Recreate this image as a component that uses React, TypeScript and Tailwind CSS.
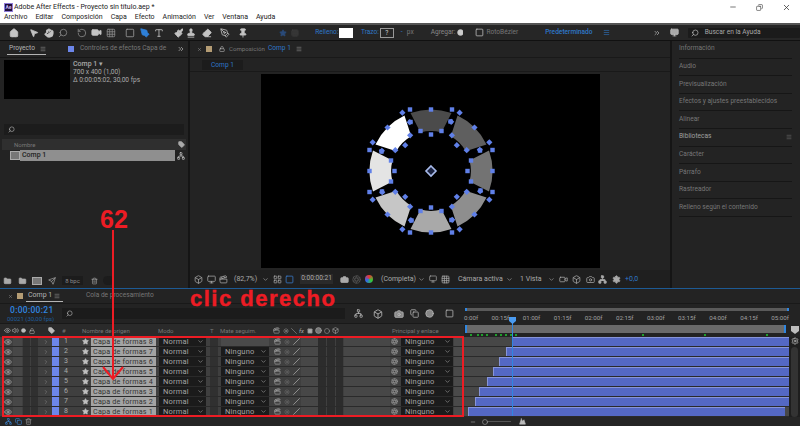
import { Aperture, Box, Camera, ChevronDown, ChevronRight, ChevronsRight, Circle, Clapperboard, Copy, Eye, Folder, Grid3x3, Hand, Home, LayoutGrid, Lock, Menu, Minus, Monitor, Mountain, MousePointer2, Network, PenTool, Pin, RotateCcw, Search, Settings, Slash, Square, Star, Stamp, Tag, Trash2, Type, Video, Volume2, X, Eraser, Paintbrush, Send, Sun } from 'lucide-react';

const menus = ['Archivo', 'Editar', 'Composición', 'Capa', 'Efecto', 'Animación', 'Ver', 'Ventana', 'Ayuda'];
const sidePanels = ['Información', 'Audio', 'Previsualización', 'Efectos y ajustes preestablecidos', 'Alinear', 'Bibliotecas', 'Carácter', 'Párrafo', 'Rastreador', 'Relleno según el contenido'];
const rulerMarks = ['0:00f', '00:15f', '01:00f', '01:15f', '02:00f', '02:15f', '03:00f', '03:15f', '04:00f', '04:15f', '05:00f'];
const greenMarks = [3, 10, 14, 19, 28, 33, 38, 43, 48, 175, 237, 299];

// layer number, name, offset of the bar inside the timeline
const layers = [
    { n: 1, name: 'Capa de formas 8', start: 48 },
    { n: 2, name: 'Capa de formas 7', start: 42 },
    { n: 3, name: 'Capa de formas 6', start: 35 },
    { n: 4, name: 'Capa de formas 5', start: 29 },
    { n: 5, name: 'Capa de formas 4', start: 23 },
    { n: 6, name: 'Capa de formas 3', start: 15 },
    { n: 7, name: 'Capa de formas 2', start: 11 },
    { n: 8, name: 'Capa de formas 1', start: 4 },
];

const ringGreys = ['#4b4b4b', '#5f5f5f', '#737373', '#8e8e8e', '#a9a9a9', '#c6c6c6', '#e4e4e4', '#ffffff'];
const handles = [[-21, -61.5], [21, -61.5], [0, -61.5], [-10.5, -40], [10.5, -40], [0, -36.5], [-20.5, -49], [19.5, -49.5]];

function Ring() {
    return (
        <svg width="140" height="140" viewBox="-70 -70 140 140">
            {ringGreys.map((fill, i) => (
                <path key={i} transform={`rotate(${i * 45})`} fill={fill} d="M-20.5 -58 A61.5 61.5 0 0 1 20.5 -58 L10.5 -38.5 A40 40 0 0 0 -10.5 -38.5 Z" />
            ))}
            {ringGreys.map((_, i) => (
                <g key={i} transform={`rotate(${i * 45})`}>
                    {handles.map(([x, y], j) => (
                        <rect key={j} x={x - 2.2} y={y - 2.2} width="4.4" height="4.4" fill="#6080e8" />
                    ))}
                </g>
            ))}
            <path d="M0 -5 L5 0 L0 5 L-5 0 Z" fill="#1b2340" stroke="#a9bcec" strokeWidth="1.6" />
        </svg>
    );
}

function Select({ label, className }: { label: string; className: string }) {
    return (
        <div className={`flex items-center justify-between shrink-0 h-[9px] bg-[#1b1b1b] pl-[4px] pr-[2px] text-[#a4a4a4] text-[7.5px] tracking-[0.2px] leading-none ${className}`}>
            <span>{label}</span>
            <ChevronDown className="w-[7px] h-[7px] text-[#a0a0a0]" />
        </div>
    );
}

function LayerRow({ layer }: { layer: (typeof layers)[number] }) {
    return (
        <div className="flex items-center h-[10px] bg-[#3f3f3f] border-b border-[#2a2a2a] text-[#a8a8a8]">
            <div className="w-[4px]" />
            <Eye className="w-[8px] h-[8px] text-[#b8b8b8]" />
            <div className="w-[1px]" />
            <div className="w-[9px] h-[9px] bg-[#474747]" />
            <div className="w-[7px] h-[9px] bg-[#303030] ml-[1px]" />
            <div className="w-[7px] h-[9px] bg-[#303030] ml-[1px]" />
            <ChevronRight className="w-[6px] h-[6px] ml-[5px] text-[#8a8a8a]" />
            <div className="w-[7px] h-[9px] bg-[#6c86ea] ml-[3px]" />
            <span className="w-[23px] pl-[5px] text-[7px] leading-none">{layer.n}</span>
            <Star className="w-[7px] h-[7px] fill-[#c0c0c0] text-[#c0c0c0] mr-[2px]" />
            <div className="w-[65px] h-[9px] shrink-0 bg-[#a3a3a3] pl-[2px] text-[#333] text-[7.2px] leading-[9px] tracking-[0.2px] whitespace-nowrap overflow-hidden">{layer.name}</div>
            <Select label="Normal" className="w-[47px] ml-[3px]" />
            <div className="w-[8px] h-[9px] bg-[#303030] ml-[4px]" />
            {layer.n === 1 ? <div className="w-[48px] h-[9px] bg-[#4a4a4a] ml-[3px]" /> : <Select label="Ninguno" className="w-[48px] ml-[3px]" />}
            <div className="w-[5px]" />
            <Clapperboard className="w-[7px] h-[7px] text-[#b0b0b0]" />
            <Sun className="w-[6px] h-[6px] text-[#777] ml-[3px]" />
            <Slash className="w-[7px] h-[7px] text-[#c8c8c8] ml-[3px] -scale-x-100 rotate-90" />
            <div className="w-[17px] h-[9px] bg-[#474747] ml-[1px]" />
            <div className="w-[8px] h-[9px] bg-[#2c2c2c]" />
            <div className="w-[8px] h-[9px] bg-[#2c2c2c] ml-[1px]" />
            <div className="w-[7px] h-[9px] bg-[#2c2c2c] ml-[1px]" />
            <div className="w-[46px] h-[9px] bg-[#474747] ml-[1px]" />
            <Aperture className="w-[7px] h-[7px] text-[#a0a0a0] ml-[1px]" />
            <Select label="Ninguno" className="w-[52px] ml-[3px]" />
            <div className="w-[10px] h-[9px] bg-[#4a4a4a] ml-[1px]" />
        </div>
    );
}

function LayerBar({ start, last }: { start: number; last: boolean }) {
    return (
        <div className="flex h-[10px] bg-[#474747] border-b border-[#2a2a2a]">
            <div className="h-full" style={{ width: start }} />
            <div className={`h-[9px] bg-[#5468c4] border-t border-l border-[#8794d8] flex-1 ${last ? 'mr-[4px]' : ''}`} />
        </div>
    );
}

export default function App() {
    return (
        <div className="relative w-[800px] h-[426px] overflow-hidden bg-[#262626] flex flex-col text-[#9c9c9c] text-[6.6px] font-['Roboto',sans-serif]">
            {/* Windows title and menu */}
            <header className="h-[13px] bg-white flex items-center pl-[4px] text-[#222] text-[7px] pt-[1px]">
                <div className="w-[9px] h-[9px] bg-[#1f0f3d] border border-[#8e7ad6] text-[#c7b8f5] text-[5px] leading-[7px] text-center font-bold">Ae</div>
                <span className="ml-[1px] whitespace-nowrap">Adobe After Effects - Proyecto sin título.aep *</span>
                <div className="ml-auto flex items-center gap-[19px] pr-[9px] text-[#333]">
                    <Minus className="w-[8px] h-[8px]" />
                    <Copy className="w-[7px] h-[7px] -scale-x-100" />
                    <X className="w-[9px] h-[9px]" />
                </div>
            </header>
            <nav className="h-[12px] bg-white flex items-center pl-[4px] gap-[8px] text-[#222] text-[7px] pb-[2px] border-b-2 border-[#555]">
                {menus.map(m => <span key={m}>{m}</span>)}
            </nav>

            {/* Tools */}
            <div className="h-[16px] bg-[#262626] border-b border-[#111] flex items-center pl-[9px] text-[#c4c4c4] whitespace-nowrap">
                <Home className="w-[10px] h-[10px] fill-[#c4c4c4]" />
                <MousePointer2 className="w-[10px] h-[10px] ml-[10px] fill-[#c4c4c4]" />
                <Hand className="w-[10px] h-[10px] ml-[5px] fill-[#c4c4c4]" />
                <Search className="w-[10px] h-[10px] ml-[4px] -scale-x-100 text-[#888]" />
                <RotateCcw className="w-[10px] h-[10px] ml-[9px] text-[#888]" />
                <Video className="w-[11px] h-[11px] ml-[4px] fill-[#c4c4c4]" />
                <Grid3x3 className="w-[10px] h-[10px] ml-[4px] text-[#8a8a8a]" />
                <Square className="w-[10px] h-[10px] ml-[9px] text-[#999]" />
                <PenTool className="w-[10px] h-[10px] ml-[5px] text-[#2f80d8] fill-[#2f80d8]" />
                <Type className="w-[10px] h-[10px] ml-[4px]" />
                <Paintbrush className="w-[10px] h-[10px] ml-[10px] fill-[#c4c4c4]" />
                <Stamp className="w-[10px] h-[10px] ml-[3px] fill-[#c4c4c4]" />
                <Eraser className="w-[10px] h-[10px] ml-[6px] fill-[#c4c4c4]" />
                <PenTool className="w-[10px] h-[10px] ml-[8px]" />
                <Pin className="w-[10px] h-[10px] ml-[8px] fill-[#c4c4c4]" />
                <Star className="w-[8px] h-[8px] ml-[31px] text-[#2a4a78] fill-[#2a4a78]" />
                <Grid3x3 className="w-[8px] h-[8px] ml-[4px] text-[#444]" />
                <span className="w-[24px] ml-[16px] text-[#2f78c8]">Relleno:</span>
                <div className="w-[14px] h-[10px] bg-white" />
                <span className="w-[19px] ml-[8px] text-[#2f78c8]">Trazo:</span>
                <div className="w-[14px] h-[10px] border border-[#999] text-center text-[#ccc] leading-[9px]">?</div>
                <span className="w-[6px] ml-[7px] text-[#2f78c8]">-</span>
                <span className="w-[24px] text-[#777]">px</span>
                <span className="w-[26px] text-[#888]">Agregar:</span>
                <Circle className="w-[7px] h-[7px] fill-[#ccc]" />
                <Square className="w-[9px] h-[9px] ml-[12px]" />
                <span className="w-[59px] ml-[2px] text-[#777]">RotoBézier</span>
                <span className="w-[58px] text-[#2f78c8] font-medium">Predeterminado</span>
                <Menu className="w-[7px] h-[7px] text-[#2f78c8]" />
                <ChevronsRight className="w-[8px] h-[8px] ml-[43px]" />
                <Monitor className="w-[11px] h-[9px] ml-[8px] fill-[#aaa]" />
                <div className="w-[113px] h-[10px] bg-[#1b1b1b] ml-[8px] flex items-center pl-[3px] rounded-[1px]">
                    <Search className="w-[8px] h-[8px] -scale-x-100" />
                    <span className="ml-[6px] text-[#a8a8a8]">Buscar en la Ayuda</span>
                </div>
            </div>

            <div className="h-[247px] flex gap-[2px] bg-[#151515]">
                {/* Project */}
                <section className="w-[188px] shrink-0 bg-[#232323] flex flex-col">
                    <div className="h-[17px] flex items-center pl-[7px] pr-[3px] border-b border-[#161616] whitespace-nowrap">
                        <div className="w-[39px] h-[12px] flex items-center pl-[2px] border-b border-[#b4b4b4]">
                            <span className="w-[26px] text-[#b4b4b4]">Proyecto</span>
                            <Menu className="w-[6px] h-[6px] ml-[5px]" />
                        </div>
                        <div className="w-[6px] h-[6px] bg-[#6c86ea] ml-[22px]" />
                        <span className="ml-[6px] text-[#777]">Controles de efectos Capa de</span>
                        <ChevronsRight className="w-[8px] h-[8px] ml-auto text-[#bbb]" />
                    </div>
                    <div className="flex pl-[4px] pt-[2px] h-[66px]">
                        <div className="w-[66px] h-[39px] bg-black" />
                        <div className="ml-[3px] leading-[8px] text-[#aaa] whitespace-nowrap">
                            <div className="font-medium text-[7px]">Comp 1 ▾</div>
                            <div>700 x 400 (1,00)</div>
                            <div>Δ 0:00:05:02, 30,00 fps</div>
                        </div>
                    </div>
                    <div className="h-[11px] mx-[4px] bg-[#1c1c1c] flex items-center pl-[4px]">
                        <Search className="w-[7px] h-[7px] -scale-x-100 text-[#bbb]" />
                    </div>
                    <div className="h-[11px] mt-[4px] mx-[2px] bg-[#2f2f2f] flex items-center pl-[12px] text-[6px] text-[#777]">
                        <span>Nombre</span>
                        <Tag className="w-[7px] h-[7px] ml-auto mr-[1px] text-[#aaa] fill-[#aaa]" />
                    </div>
                    <div className="h-[11px] flex items-center pl-[10px]">
                        <div className="w-[10px] h-[9px] bg-[#777] border border-[#aaa] shrink-0" />
                        <div className="w-[155px] h-[11px] shrink-0 bg-[#8f8f8f] text-[#222] pl-[2px] leading-[11px] text-[7px] font-medium">Comp 1</div>
                        <Network className="w-[8px] h-[8px] ml-[2px] text-[#ccc]" />
                    </div>
                    <div className="mt-auto h-[11px] mb-[2px] flex items-center pl-[3px] text-[#aaa]">
                        <Folder className="w-[9px] h-[8px] fill-[#aaa]" />
                        <Folder className="w-[9px] h-[8px] ml-[6px] fill-[#aaa]" />
                        <div className="w-[10px] h-[8px] ml-[5px] bg-[#777] border border-[#aaa]" />
                        <Send className="w-[8px] h-[8px] ml-[6px]" />
                        <span className="w-[21px] ml-[6px] text-center text-[6px] text-[#888] bg-[#1c1c1c] leading-[9px]">8 bpc</span>
                        <Trash2 className="w-[7px] h-[8px] ml-[8px]" />
                        <div className="w-[11px] h-[9px] ml-[5px] bg-[#1c1c1c] rounded-full" />
                    </div>
                </section>

                {/* Composition */}
                <section className="w-[480px] shrink-0 bg-[#232323] flex flex-col">
                    <div className="h-[17px] flex items-center pl-[7px] whitespace-nowrap border-b border-[#191919]">
                        <X className="w-[5px] h-[5px]" />
                        <div className="w-[6px] h-[6px] bg-[#b49c74] ml-[4px]" />
                        <Lock className="w-[6px] h-[6px] ml-[7px] text-[#ccc]" />
                        <span className="w-[39px] ml-[4px] text-[#777] text-[6.1px]">Composición</span>
                        <span className="w-[22px] text-[#2f78c8]">Comp 1</span>
                        <Menu className="w-[6px] h-[6px] ml-[6px]" />
                    </div>
                    <div className="h-[14px] border-b border-[#191919] pl-[12px] pt-[2px]">
                        <div className="w-[41px] h-[10px] bg-[#1c1c1c] text-[#2f78c8] text-center leading-[10px]">Comp 1</div>
                    </div>
                    <div className="flex-1 flex justify-start pl-[71px] pt-[2px]">
                        <div className="w-[339px] h-[194px] bg-black flex justify-center pt-[27px] pl-[1px]">
                            <Ring />
                        </div>
                    </div>
                    <div className="h-[18px] bg-[#1f1f1f] flex items-center pl-[4px] text-[#aaa] whitespace-nowrap text-[7px]">
                        <Box className="w-[9px] h-[9px]" />
                        <Monitor className="w-[9px] h-[9px] ml-[4px]" />
                        <Clapperboard className="w-[9px] h-[9px] ml-[3px]" />
                        <span className="w-[22px] ml-[6px]">(82,7%)</span>
                        <ChevronDown className="w-[7px] h-[7px] ml-[6px]" />
                        <LayoutGrid className="w-[9px] h-[9px] ml-[4px]" />
                        <Square className="w-[9px] h-[9px] ml-[3px] text-[#3b7fd0]" />
                        <span className="w-[33px] ml-[6px] bg-[#2a2a2a] text-center text-[6.6px]">0:00:00:21</span>
                        <Camera className="w-[9px] h-[9px] ml-[7px] fill-[#aaa]" />
                        <Aperture className="w-[9px] h-[9px] ml-[3px] text-[#555]" />
                        <div className="w-[8px] h-[8px] ml-[4px] rounded-full bg-[conic-gradient(#e33,#3c3,#36e,#e33)]" />
                        <span className="w-[33px] ml-[8px]">(Completa)</span>
                        <ChevronDown className="w-[7px] h-[7px] ml-[4px]" />
                        <Monitor className="w-[8px] h-[8px] ml-[4px]" />
                        <Grid3x3 className="w-[9px] h-[9px] ml-[4px]" />
                        <span className="w-[42px] ml-[8px]">Cámara activa</span>
                        <ChevronDown className="w-[7px] h-[7px] ml-[6px]" />
                        <span className="w-[20px] ml-[7px]">1 Vista</span>
                        <ChevronDown className="w-[7px] h-[7px] ml-[8px]" />
                        <Video className="w-[9px] h-[9px] ml-[4px]" />
                        <Box className="w-[9px] h-[9px] ml-[4px]" />
                        <Camera className="w-[9px] h-[9px] ml-[5px]" />
                        <Network className="w-[9px] h-[9px] ml-[3px] fill-[#aaa]" />
                        <Settings className="w-[9px] h-[9px] ml-[5px] fill-[#aaa]" />
                        <span className="ml-[4px] text-[#2f78c8]">+0,0</span>
                    </div>
                </section>

                {/* Side panels */}
                <aside className="flex-1 min-w-0 bg-[#232323] pl-[7px] pr-[8px]">
                    {sidePanels.map(p => (
                        <div key={p} className="h-[17.6px] border-b border-[#161616] flex items-center justify-between text-[#777] whitespace-nowrap">
                            <span className={p === 'Bibliotecas' ? 'text-[#a0a0a0]' : ''}>{p}</span>
                            {p === 'Bibliotecas' && <Menu className="w-[6px] h-[6px]" />}
                        </div>
                    ))}
                </aside>
            </div>

            {/* Timeline */}
            <section className="flex-1 bg-[#232323] border-t border-[#1d5a94] flex flex-col">
                <div className="h-[15px] flex items-center pl-[8px] whitespace-nowrap border-b border-[#191919]">
                    <X className="w-[5px] h-[5px]" />
                    <div className="w-[6px] h-[6px] bg-[#b49c74] ml-[4px]" />
                    <div className="w-[37px] h-[12px] ml-[3px] flex items-center pl-[2px] border-b border-[#b4b4b4]">
                        <span className="w-[23px] text-[#b4b4b4] text-[7px]">Comp 1</span>
                        <Menu className="w-[6px] h-[6px] ml-[3px]" />
                    </div>
                    <span className="ml-[23px] text-[#777]">Cola de procesamiento</span>
                </div>
                <div className="flex h-[33px]">
                    <div className="w-[464px] flex flex-col">
                        <div className="h-[20px] flex items-center pl-[7px] border-b border-[#191919]">
                            <div className="w-[50px] whitespace-nowrap">
                                <div className="pl-[3px] text-[#2f86e0] text-[8.5px] leading-[9px] font-medium tracking-[0.3px]">0:00:00:21</div>
                                <div className="text-[#1e5c9c] text-[6px] leading-[7px]">00021 (30,00 fps)</div>
                            </div>
                            <div className="w-[283px] h-[11px] ml-[5px] bg-[#1b1b1b] flex items-center pl-[4px]">
                                <Search className="w-[7px] h-[7px] -scale-x-100 text-[#bbb]" />
                            </div>
                            <Network className="w-[9px] h-[9px] ml-[9px] text-[#bbb]" />
                            <Box className="w-[10px] h-[10px] ml-[10px] text-[#bbb]" />
                            <Camera className="w-[10px] h-[10px] ml-[11px] text-[#bbb] fill-[#888]" />
                            <Copy className="w-[9px] h-[9px] ml-[6px] text-[#bbb]" />
                            <Circle className="w-[9px] h-[9px] ml-[6px] text-[#bbb] fill-[#888]" />
                            <Square className="w-[9px] h-[9px] ml-[11px] text-[#bbb]" />
                        </div>
                        <div className="h-[13px] flex items-center pl-[4px] text-[6px] text-[#777] whitespace-nowrap bg-[#2a2a2a]">
                            <Eye className="w-[7px] h-[7px] text-[#bbb]" />
                            <Volume2 className="w-[7px] h-[7px] ml-[1px] text-[#bbb]" />
                            <Circle className="w-[5px] h-[5px] ml-[2px] fill-[#bbb] text-[#bbb]" />
                            <Lock className="w-[6px] h-[6px] ml-[3px] text-[#bbb]" />
                            <Tag className="w-[7px] h-[7px] ml-[13px] text-[#bbb] fill-[#bbb]" />
                            <span className="w-[27px] pl-[7px]">#</span>
                            <span className="w-[76px]">Nombre de origen</span>
                            <span className="w-[52px]">Modo</span>
                            <span className="w-[10px]">T</span>
                            <span className="w-[53px]">Mate seguim.</span>
                            <Clapperboard className="w-[7px] h-[7px] text-[#aaa]" />
                            <Sun className="w-[6px] h-[6px] ml-[3px] text-[#aaa]" />
                            <Slash className="w-[6px] h-[6px] ml-[2px] text-[#aaa] rotate-90" />
                            <span className="w-[6px] ml-[2px] text-[#aaa] italic">fx</span>
                            <Square className="w-[6px] h-[6px] ml-[2px] fill-[#aaa]" />
                            <Circle className="w-[7px] h-[7px] ml-[2px] text-[#aaa] fill-[#777]" />
                            <Circle className="w-[6px] h-[6px] ml-[2px] text-[#aaa]" />
                            <Box className="w-[7px] h-[7px] ml-[2px] text-[#aaa]" />
                            <span className="ml-[53px]">Principal y enlace</span>
                        </div>
                    </div>
                    <div className="flex-1 flex flex-col">
                        <div className="h-[3px] mt-[4px] mr-[11px] ml-[1px] bg-[#5a5a5a] border-x-2 border-[#2f86e0]" />
                        <div className="flex justify-between h-[11px] mt-[2px] mr-[11px] text-[6.2px] leading-[10px] text-[#a0a0a0] whitespace-nowrap">
                            {rulerMarks.map(m => <span key={m}>{m}</span>)}
                        </div>
                        <div className="h-[8px] mt-[1px] mr-[14px] ml-[1px] bg-[#6a6a6a] border-x-2 border-[#2f86e0]" />
                        <div className="relative h-[3px] mr-[11px]">
                            {greenMarks.map(g => <div key={g} className="absolute top-[1px] w-[2px] h-[2px] bg-[#1fa02c]" style={{ left: g + 3 }} />)}
                        </div>
                    </div>
                </div>
                <div className="flex h-[80px]">
                    <div className="w-[464px] shrink-0 flex flex-col">
                        {layers.map(l => <LayerRow key={l.n} layer={l} />)}
                    </div>
                    <div className="flex-1 flex flex-col">
                        {layers.map((l, i) => <LayerBar key={l.n} start={l.start} last={i === layers.length - 1} />)}
                    </div>
                    <div className="w-[11px] bg-[#1e1e1e] flex flex-col items-center">
                        <Settings className="w-[8px] h-[8px] text-[#ccc]" />
                        <div className="w-[7px] flex-1 mt-[2px] bg-[#333] rounded-full" />
                    </div>
                </div>
                <div className="flex-1 flex items-center pl-[5px] text-[#3f8ad8] bg-[#262626]">
                    <Network className="w-[7px] h-[7px]" />
                    <Copy className="w-[7px] h-[7px] ml-[3px]" />
                    <Trash2 className="w-[7px] h-[7px] ml-[3px] text-[#999]" />
                    <Minus className="w-[6px] h-[6px] ml-[438px] text-[#bbb]" />
                    <Circle className="w-[6px] h-[6px] ml-[6px] text-[#bbb]" />
                    <div className="w-[23px] h-px bg-[#555]" />
                    <Mountain className="w-[9px] h-[7px] ml-[7px] text-[#bbb] fill-[#bbb]" />
                </div>
            </section>

            {/* Annotations drawn over the screenshot */}
            <div className="absolute left-[2px] top-[336px] w-[462px] h-[81px] border-2 border-[#ed1c24]" />
            <div className="absolute left-[512px] top-[320px] w-px h-[96px] bg-[#2f86e0]" />
            <svg className="absolute left-[509px] top-[317px]" width="7" height="7" viewBox="0 0 7 7">
                <path d="M0 0 H7 V4 L3.5 7 L0 4 Z" fill="#4a9bf0" />
            </svg>
            <svg className="absolute left-[791px] top-[326px]" width="8" height="8" viewBox="0 0 8 8">
                <path d="M0 0 H8 V5 L4 8 L0 5 Z" fill="#bdbdbd" />
            </svg>
            <div className="absolute left-[100px] top-[205px] font-['Liberation_Sans',sans-serif] font-bold text-[25px] leading-[28px] text-[#ed1c24]">62</div>
            <div className="absolute left-[190px] top-[286px] font-['Liberation_Sans',sans-serif] font-bold text-[22px] leading-[26px] tracking-[1.5px] text-[#ed1c24] whitespace-nowrap [-webkit-text-stroke:0.4px_#ed1c24]">clic derecho</div>
            <svg className="absolute left-[100px] top-[230px]" width="26" height="152" viewBox="0 0 26 152" fill="none" stroke="#ed1c24" strokeWidth="2">
                <path d="M13 0 V149 M3 137 L13 149 L23 137" />
            </svg>
        </div>
    );
}
